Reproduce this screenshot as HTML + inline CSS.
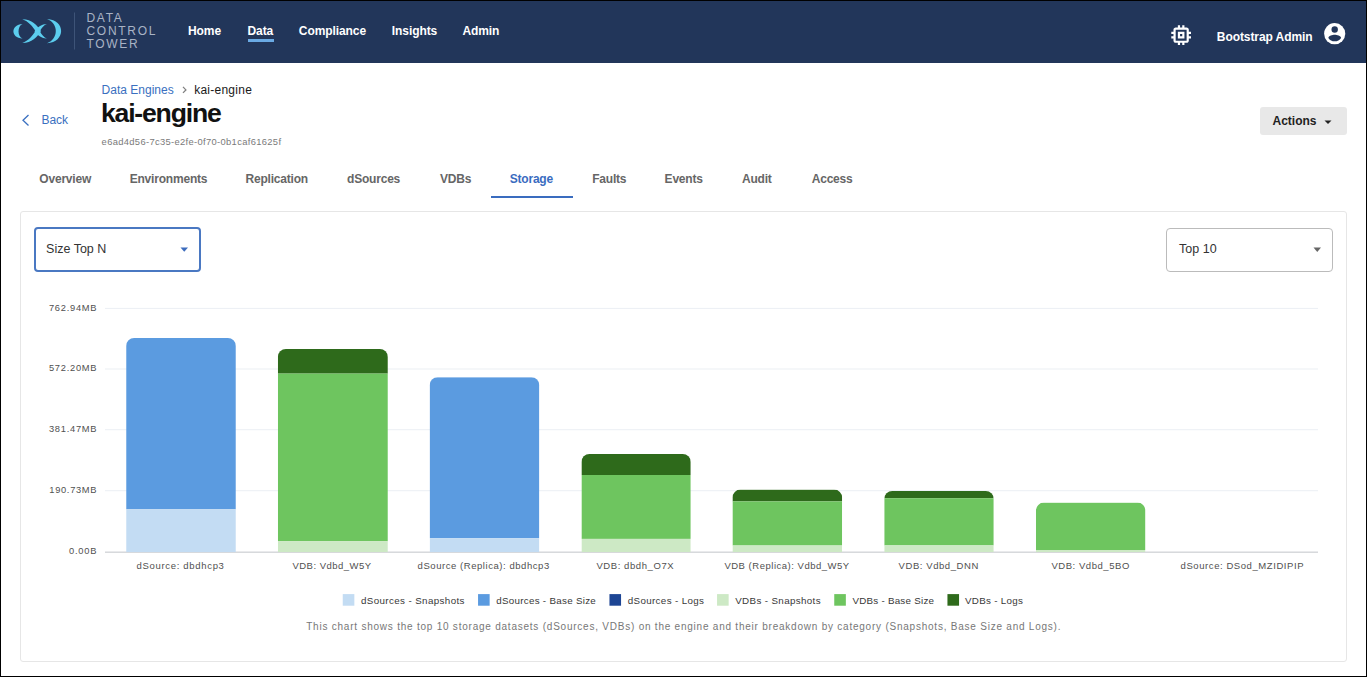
<!DOCTYPE html>
<html><head><meta charset="utf-8">
<style>
*{margin:0;padding:0;box-sizing:border-box}
html,body{width:1367px;height:677px;overflow:hidden;background:#fff;font-family:"Liberation Sans",sans-serif}
#frame{position:absolute;left:0;top:0;width:1367px;height:677px;border:1px solid #000;background:#fff}
.t{position:absolute;white-space:nowrap;line-height:1}
#hdr{position:absolute;left:1px;top:1px;width:1365px;height:62px;background:#22365a}
.nav{font-size:12px;font-weight:bold;color:#fff;letter-spacing:-0.08px}
.tab{font-size:12px;font-weight:bold;color:#666;letter-spacing:-0.2px}
</style></head>
<body>
<div id="frame"></div>
<div id="hdr"></div>
<!-- logo -->
<svg style="position:absolute;left:0;top:0" width="1367" height="677" viewBox="0 0 1367 677">
  <g fill="#5ccdee">
    <path d="M22.6 24 C10.4 24.5 10.4 38 22.6 38.6 C17.2 37 17.2 25.6 22.6 24Z"/>
    <path d="M47 19 C65.9 19.8 65.9 42.3 47 43.2 C58.8 39 58.8 23.2 47 19Z"/>
    <path d="M22.3 19.2 C32 19.2 37 25 41 31.1 C37 37.2 32 43 22.3 43 C28.5 40.8 32.5 36 35.5 31.1 C32.5 26.2 28.5 21.4 22.3 19.2Z"/>
    <path d="M46.8 24.1 C42 24 38 27 34.4 31.35 C38 35.7 42 38.7 46.8 38.6 C44 37.5 41.8 35 39.8 31.35 C41.8 27.7 44 25.2 46.8 24.1Z"/>
  </g>
  <rect x="74" y="12.5" width="1" height="37" fill="#3e5478"/>
</svg>
<div class="t" style="left:86.5px;top:12.2px;font-size:12px;color:#a9b3c5;letter-spacing:1.7px">DATA</div>
<div class="t" style="left:86.5px;top:24.7px;font-size:12px;color:#a9b3c5;letter-spacing:1.7px">CONTROL</div>
<div class="t" style="left:86.5px;top:37.7px;font-size:12px;color:#a9b3c5;letter-spacing:1.7px">TOWER</div>

<div class="t nav" style="left:188px;top:24.8px">Home</div>
<div class="t nav" style="left:247.5px;top:24.8px">Data</div>
<div style="position:absolute;left:247.5px;top:38.7px;width:26px;height:3px;background:#6aaae4"></div>
<div class="t nav" style="left:298.8px;top:24.8px">Compliance</div>
<div class="t nav" style="left:391.8px;top:24.8px">Insights</div>
<div class="t nav" style="left:462.4px;top:24.8px">Admin</div>

<!-- chip icon -->
<svg style="position:absolute;left:1167.8px;top:21.6px" width="26.3" height="26.3" viewBox="0 0 24 24">
  <path fill="#fff" d="M15 9H9v6h6V9zm-2 4h-2v-2h2v2zm8-2V9h-2V7c0-1.1-.9-2-2-2h-2V3h-2v2h-2V3H9v2H7c-1.1 0-2 .9-2 2v2H3v2h2v2H3v2h2v2c0 1.1.9 2 2 2h2v2h2v-2h2v2h2v-2h2c1.1 0 2-.9 2-2v-2h2v-2h-2v-2h2zm-4 6H7V7h10v10z"/>
</svg>
<div class="t nav" style="left:1216.8px;top:30.8px">Bootstrap Admin</div>
<svg style="position:absolute;left:1321.8px;top:21.4px" width="25.4" height="25.4" viewBox="0 0 24 24">
  <circle cx="12" cy="12" r="10" fill="#fff"/>
  <circle cx="12" cy="8" r="3" fill="#22365a"/>
  <path fill="#22365a" d="M12 19.2c-2.5 0-4.71-1.28-6-3.22.03-1.99 4-3.08 6-3.08 1.99 0 5.970 1.09 6 3.08-1.29 1.94-3.5 3.22-6 3.22z"/>
</svg>

<!-- breadcrumb -->
<div class="t" style="left:101.6px;top:83.7px;font-size:12px;color:#3a70c0">Data Engines</div>
<svg style="position:absolute;left:181px;top:85px" width="8" height="10" viewBox="0 0 8 10"><path d="M2 1.9 L4.9 4.9 L2 7.9" fill="none" stroke="#808080" stroke-width="1.3"/></svg>
<div class="t" style="left:194.2px;top:83.7px;font-size:12px;color:#1a1a1a;letter-spacing:0.25px">kai-engine</div>
<div class="t" style="left:101px;top:99.9px;font-size:26.6px;font-weight:bold;color:#111;letter-spacing:-1.2px">kai-engine</div>
<svg style="position:absolute;left:20px;top:113px" width="12" height="14" viewBox="0 0 12 14"><path d="M8.5 2 L3 7.3 L8.5 12.5" fill="none" stroke="#3a70c0" stroke-width="1.3"/></svg>
<div class="t" style="left:41.4px;top:114.1px;font-size:12px;color:#3a70c0">Back</div>
<div class="t" style="left:101.6px;top:137.3px;font-size:9.4px;color:#7a7a7a;letter-spacing:0.33px">e6ad4d56-7c35-e2fe-0f70-0b1caf61625f</div>

<!-- actions -->
<div style="position:absolute;left:1259.5px;top:107px;width:87.5px;height:28px;background:#e8e8e8;border-radius:3px"></div>
<div class="t" style="left:1272.5px;top:115px;font-size:12px;font-weight:bold;color:#222">Actions</div>
<svg style="position:absolute;left:1324px;top:119.5px" width="8" height="5" viewBox="0 0 8 5"><path d="M0.5 0.5 L7.5 0.5 L4 4Z" fill="#222"/></svg>

<!-- tabs -->
<div class="t tab" style="left:39.3px;top:173.3px">Overview</div>
<div class="t tab" style="left:129.7px;top:173.3px">Environments</div>
<div class="t tab" style="left:245.5px;top:173.3px">Replication</div>
<div class="t tab" style="left:347px;top:173.3px">dSources</div>
<div class="t tab" style="left:440px;top:173.3px">VDBs</div>
<div class="t tab" style="left:509.7px;top:173.3px;color:#3a6cbf">Storage</div>
<div style="position:absolute;left:490.8px;top:196px;width:82.2px;height:2px;background:#3a6cbf"></div>
<div class="t tab" style="left:592.2px;top:173.3px">Faults</div>
<div class="t tab" style="left:664.6px;top:173.3px">Events</div>
<div class="t tab" style="left:742px;top:173.3px">Audit</div>
<div class="t tab" style="left:811.7px;top:173.3px">Access</div>

<!-- card -->
<div style="position:absolute;left:20px;top:211px;width:1327px;height:451px;border:1px solid #e6e6e6;border-radius:3px"></div>
<div style="position:absolute;left:33.5px;top:227px;width:167px;height:44.5px;border:2px solid #4a78c2;border-radius:4px"></div>
<div class="t" style="left:46.1px;top:243.4px;font-size:12.5px;color:#333">Size Top N</div>
<svg style="position:absolute;left:180px;top:247.4px" width="9" height="6" viewBox="0 0 9 6"><path d="M0.5 0.5 L8 0.5 L4.25 4.8Z" fill="#3d6cbd"/></svg>
<div style="position:absolute;left:1166.4px;top:227.6px;width:167px;height:44px;border:1px solid #bbb;border-radius:4px"></div>
<div class="t" style="left:1179.1px;top:243.4px;font-size:12.5px;color:#333">Top 10</div>
<svg style="position:absolute;left:1313px;top:247px" width="9" height="6" viewBox="0 0 9 6"><path d="M0.5 0.5 L8 0.5 L4.25 5Z" fill="#666"/></svg>

<!-- chart -->
<svg style="position:absolute;left:0;top:0" width="1367" height="677" viewBox="0 0 1367 677" font-family="Liberation Sans">
  <g fill="#ebeff4">
    <rect x="105" y="307.9" width="1213" height="1"/>
    <rect x="105" y="368.5" width="1213" height="1"/>
    <rect x="105" y="429.2" width="1213" height="1"/>
    <rect x="105" y="490.2" width="1213" height="1"/>
  </g>
  <g font-size="9.3" fill="#505050" text-anchor="end">
    <text x="96.5" y="310.6" textLength="47.6" lengthAdjust="spacing">762.94MB</text>
    <text x="96.5" y="371.3" textLength="47.6" lengthAdjust="spacing">572.20MB</text>
    <text x="96.5" y="432" textLength="47.6" lengthAdjust="spacing">381.47MB</text>
    <text x="96.5" y="492.7" textLength="47.2" lengthAdjust="spacing">190.73MB</text>
    <text x="96.5" y="554.4" textLength="27.6" lengthAdjust="spacing">0.00B</text>
  </g>

  <rect x="105" y="551.5" width="1213" height="1.4" fill="#d3d5d9"/>
  <clipPath id="c126"><path d="M126.15 552.2 V346 A8 8 0 0 1 134.15 338 H227.85 A8 8 0 0 1 235.85 346 V552.2 Z"/></clipPath>
<g clip-path="url(#c126)">
<rect x="126.15" y="338" width="109.7" height="171.3" fill="#5b9be0"/>
<rect x="126.15" y="509.3" width="109.7" height="42.9" fill="#c3dcf3"/>
</g>
<clipPath id="c277"><path d="M277.84999999999997 552.2 V357 A8 8 0 0 1 285.84999999999997 349 H379.85 A8 8 0 0 1 387.85 357 V552.2 Z"/></clipPath>
<g clip-path="url(#c277)">
<rect x="277.84999999999997" y="349" width="110.0" height="24.6" fill="#2e6a1b"/>
<rect x="277.84999999999997" y="373.6" width="110.0" height="167.7" fill="#6ec55f"/>
<rect x="277.84999999999997" y="541.3" width="110.0" height="10.9" fill="#cde9c5"/>
</g>
<clipPath id="c429"><path d="M429.65 552.2 V385.2 A8 8 0 0 1 437.65 377.2 H531.35 A8 8 0 0 1 539.35 385.2 V552.2 Z"/></clipPath>
<g clip-path="url(#c429)">
<rect x="429.65" y="377.2" width="109.7" height="160.9" fill="#5b9be0"/>
<rect x="429.65" y="538.1" width="109.7" height="14.1" fill="#c3dcf3"/>
</g>
<clipPath id="c581"><path d="M581.4499999999999 552.2 V462 A8 8 0 0 1 589.4499999999999 454 H682.75 A8 8 0 0 1 690.75 462 V552.2 Z"/></clipPath>
<g clip-path="url(#c581)">
<rect x="581.4499999999999" y="454" width="109.3" height="21.0" fill="#2e6a1b"/>
<rect x="581.4499999999999" y="475" width="109.3" height="63.9" fill="#6ec55f"/>
<rect x="581.4499999999999" y="538.9" width="109.3" height="13.3" fill="#cde9c5"/>
</g>
<clipPath id="c732"><path d="M732.4499999999999 552.2 V497.6 A8 8 0 0 1 740.4499999999999 489.6 H834.15 A8 8 0 0 1 842.15 497.6 V552.2 Z"/></clipPath>
<g clip-path="url(#c732)">
<rect x="732.4499999999999" y="489.6" width="109.7" height="11.8" fill="#2e6a1b"/>
<rect x="732.4499999999999" y="501.4" width="109.7" height="44.1" fill="#6ec55f"/>
<rect x="732.4499999999999" y="545.5" width="109.7" height="6.7" fill="#cde9c5"/>
</g>
<clipPath id="c884"><path d="M884.25 552.2 V499 A8 8 0 0 1 892.25 491 H985.75 A8 8 0 0 1 993.75 499 V552.2 Z"/></clipPath>
<g clip-path="url(#c884)">
<rect x="884.25" y="491" width="109.5" height="7.2" fill="#2e6a1b"/>
<rect x="884.25" y="498.2" width="109.5" height="47.2" fill="#6ec55f"/>
<rect x="884.25" y="545.4" width="109.5" height="6.8" fill="#cde9c5"/>
</g>
<clipPath id="c1035"><path d="M1035.95 552.2 V510.6 A8 8 0 0 1 1043.95 502.6 H1137.4499999999998 A8 8 0 0 1 1145.4499999999998 510.6 V552.2 Z"/></clipPath>
<g clip-path="url(#c1035)">
<rect x="1035.95" y="502.6" width="109.5" height="47.4" fill="#6ec55f"/>
<rect x="1035.95" y="550" width="109.5" height="2.2" fill="#cde9c5"/>
</g>

  <g font-size="9.5" fill="#505050">
    <text x="136.5" y="568.6" textLength="87.4" lengthAdjust="spacing">dSource: dbdhcp3</text>
    <text x="292.4" y="568.6" textLength="78.8" lengthAdjust="spacing">VDB: Vdbd_W5Y</text>
    <text x="417.6" y="568.6" textLength="131.6" lengthAdjust="spacing">dSource (Replica): dbdhcp3</text>
    <text x="596.4" y="568.6" textLength="77.2" lengthAdjust="spacing">VDB: dbdh_O7X</text>
    <text x="724.4" y="568.6" textLength="124.8" lengthAdjust="spacing">VDB (Replica): Vdbd_W5Y</text>
    <text x="898.6" y="568.6" textLength="79.7" lengthAdjust="spacing">VDB: Vdbd_DNN</text>
    <text x="1051.4" y="568.6" textLength="77.9" lengthAdjust="spacing">VDB: Vdbd_5BO</text>
    <text x="1180.6" y="568.6" textLength="122.9" lengthAdjust="spacing">dSource: DSod_MZIDIPIP</text>
  </g>
  <g>
    <rect x="342.75" y="594.1" width="11.6" height="11.6" fill="#c3dcf3"/>
    <rect x="478.05" y="594.1" width="11.6" height="11.6" fill="#5b9be0"/>
    <rect x="609.45" y="594.1" width="11.6" height="11.6" fill="#1d4594"/>
    <rect x="717.05" y="594.1" width="11.6" height="11.6" fill="#cde9c5"/>
    <rect x="834.25" y="594.1" width="11.6" height="11.6" fill="#6ec55f"/>
    <rect x="947.45" y="594.1" width="11.6" height="11.6" fill="#2e6a1b"/>
  </g>
  <g font-size="9.8" fill="#383838">
    <text x="361" y="603.8" textLength="103.5" lengthAdjust="spacing">dSources - Snapshots</text>
    <text x="496.2" y="603.8" textLength="99.6" lengthAdjust="spacing">dSources - Base Size</text>
    <text x="627.7" y="603.8" textLength="76.3" lengthAdjust="spacing">dSources - Logs</text>
    <text x="735.2" y="603.8" textLength="85.4" lengthAdjust="spacing">VDBs - Snapshots</text>
    <text x="852.4" y="603.8" textLength="81.6" lengthAdjust="spacing">VDBs - Base Size</text>
    <text x="965" y="603.8" textLength="58" lengthAdjust="spacing">VDBs - Logs</text>
  </g>
  <text x="306.2" y="630.1" font-size="10" fill="#777" textLength="754.3" lengthAdjust="spacing">This chart shows the top 10 storage datasets (dSources, VDBs) on the engine and their breakdown by category (Snapshots, Base Size and Logs).</text>
</svg>
</body></html>
